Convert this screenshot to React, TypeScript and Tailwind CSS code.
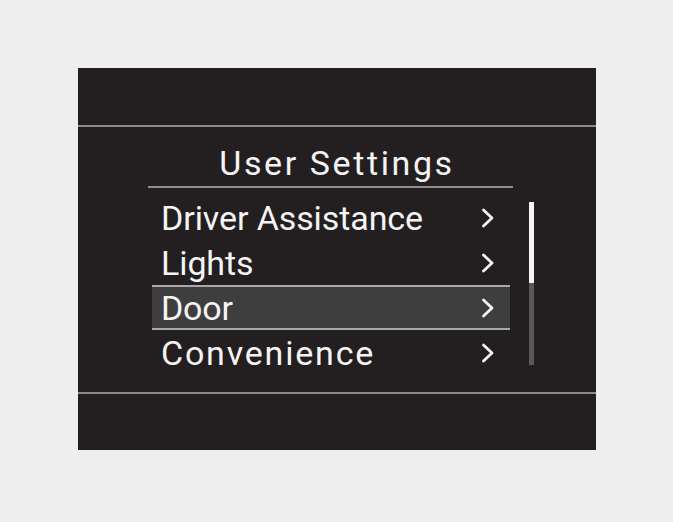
const items = [
  { label: "Driver Assistance", track: "tracking-[-0.1px]" },
  { label: "Lights", track: "tracking-[-0.1px]" },
  { label: "Door", track: "tracking-[-0.2px]" },
  { label: "Convenience", track: "tracking-[1.8px]" },
];
const selected = 2;

function Chevron() {
  return (
    <svg width="14" height="22" viewBox="0 0 14 22" fill="none">
      <path
        d="M2.5 3 L11 11 L2.5 19"
        stroke="#f4f4f4"
        strokeWidth="2.8"
        strokeLinecap="round"
        strokeLinejoin="round"
      />
    </svg>
  );
}

export default function App() {
  return (
    <div className="min-h-screen w-full bg-[#eeeeee] pt-[68px] pl-[78px] font-['Roboto',sans-serif]">
      <div className="w-[518px] h-[382px] bg-[#231f20] flex flex-col">
        {/* top band */}
        <div className="h-[57px]"></div>
        <div className="h-[2px] bg-[#8a8a8a]"></div>

        {/* menu */}
        <div className="flex-1 flex flex-col">
          <div className="mt-[19px] text-center text-[34px] leading-[34px] text-[#f4f4f4] tracking-[2.6px]">
            User Settings
          </div>
          <div className="ml-[70px] w-[365px] h-[2px] mt-[6px] bg-[#8f8f8f]"></div>

          <div className="flex pl-[74px] gap-[19px] mt-[7px]">
            <div className="w-[358px] flex flex-col">
              {items.map((it, i) => (
                <div
                  key={it.label}
                  className={
                    i === selected
                      ? "h-[45px] flex items-center justify-between pl-[9px] pr-[15px] bg-[#3e3e3e] border-y-2 border-[#a8a8a8]"
                      : "h-[45px] flex items-center justify-between pl-[9px] pr-[15px]"
                  }
                >
                  <span className={"text-[34px] leading-[34px] text-[#f4f4f4] " + it.track}>
                    {it.label}
                  </span>
                  <Chevron />
                </div>
              ))}
            </div>

            {/* scrollbar */}
            <div className="w-[5px] h-[163px] mt-[7px] flex flex-col">
              <div className="h-[81px] bg-[#f4f4f4]"></div>
              <div className="flex-1 bg-[#595959]"></div>
            </div>
          </div>
        </div>

        {/* bottom band */}
        <div className="h-[2px] bg-[#8a8a8a]"></div>
        <div className="h-[56px]"></div>
      </div>
    </div>
  );
}
